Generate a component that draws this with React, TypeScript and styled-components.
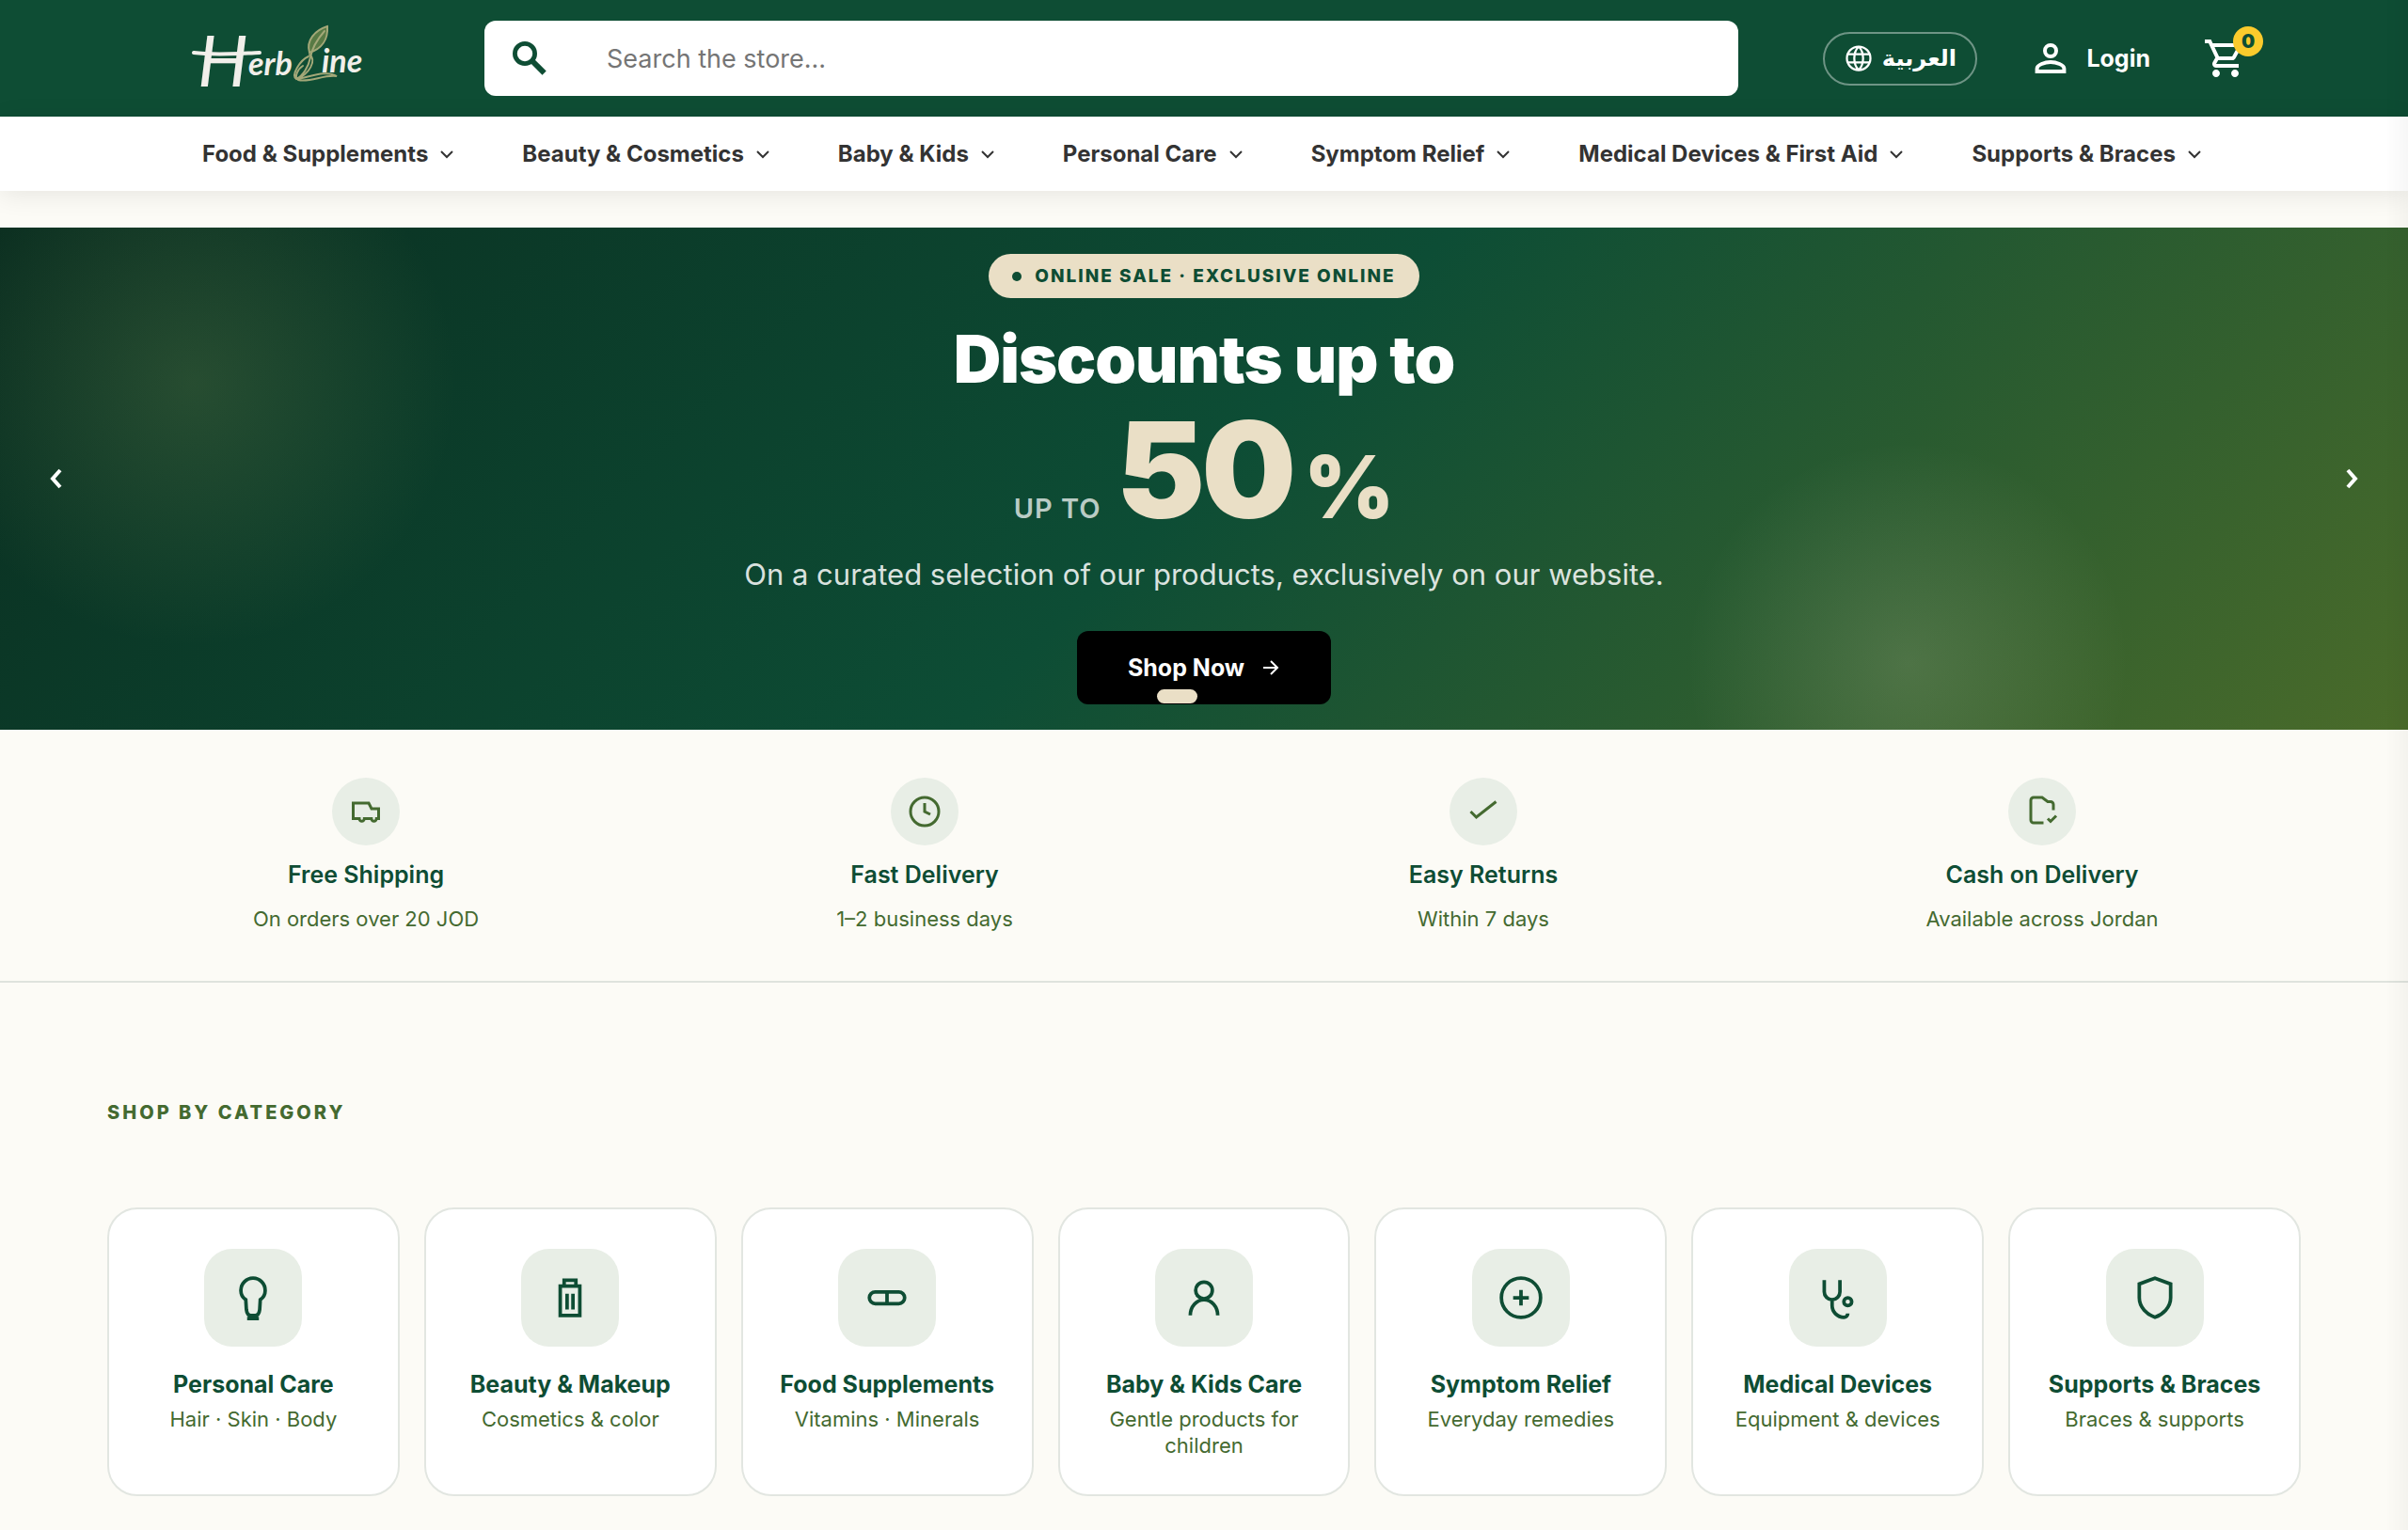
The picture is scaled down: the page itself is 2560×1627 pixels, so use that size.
import React from "react";
import styled, { createGlobalStyle } from "styled-components";

const green = "#0e4d34";
const olive = "#446a30";
const sand = "#eadfc6";

const GlobalStyle = createGlobalStyle`
  * { box-sizing: border-box; }
  body {
    margin: 0;
    background: #fcfbf6;
    color: #333;
    font-family: Inter, "Open Sans", sans-serif;
    -webkit-font-smoothing: antialiased;
  }
  h1, h2, h3, p, ul { margin: 0; padding: 0; }
  ul { list-style: none; }
  a { color: inherit; text-decoration: none; }
  button { font: inherit; cursor: pointer; }
`;

const Page = styled.div`
  overflow-x: hidden;
`;

const EdgeShade = styled.div`
  position: fixed;
  top: 0;
  right: 0;
  bottom: 0;
  width: 24px;
  pointer-events: none;
  background: linear-gradient(to right, transparent, rgba(0, 0, 0, 0.03));
`;

const TopBar = styled.header`
  display: flex;
  align-items: center;
  height: 124px;
  padding: 0 164px 0 204px;
  background: ${green};
  color: #fff;
`;

const LogoLink = styled.a`
  display: block;
  width: 192px;
  height: 100px;
  flex: none;
  margin-right: 119px;
`;

const SearchBox = styled.form`
  display: flex;
  align-items: center;
  flex: 1;
  height: 80px;
  margin-right: 90px;
  border-radius: 12px;
  background: #fff;
`;

const SearchButton = styled.button`
  display: grid;
  place-items: center;
  width: 96px;
  height: 80px;
  padding: 0;
  border: 0;
  background: none;
  color: ${green};
`;

const SearchInput = styled.input`
  flex: 1;
  height: 80px;
  padding: 0 34px;
  border: 0;
  outline: 0;
  background: none;
  font: 400 27px Inter, sans-serif;
  color: #333;
  &::placeholder { color: #757575; opacity: 1; }
`;

const LangButton = styled.button`
  display: flex;
  align-items: center;
  justify-content: center;
  gap: 10px;
  width: 164px;
  height: 57px;
  border: 2px solid rgba(255, 255, 255, 0.4);
  border-radius: 29px;
  background: none;
  color: #fff;
  font: 700 24px "DejaVu Sans", sans-serif;
`;

const AccountLink = styled.a`
  display: flex;
  align-items: center;
  gap: 14px;
  margin-left: 54px;
  font-size: 25px;
  font-weight: 700;
`;

const CartLink = styled.a`
  position: relative;
  display: block;
  width: 54px;
  height: 48px;
  margin-left: 56px;
`;

const CartCount = styled.span`
  position: absolute;
  top: -10px;
  right: -10px;
  width: 32px;
  height: 32px;
  border-radius: 50%;
  background: #fbcb2c;
  color: ${green};
  font-size: 20px;
  font-weight: 900;
  line-height: 32px;
  text-align: center;
`;

const NavBar = styled.nav`
  position: relative;
  background: #fff;
  box-shadow: 0 4px 28px rgba(0, 0, 0, 0.09);
`;

const NavList = styled.ul`
  display: flex;
  justify-content: space-between;
  padding: 0 219px 0 215px;
`;

const NavLink = styled.a`
  display: flex;
  align-items: center;
  gap: 12px;
  height: 79px;
  font-size: 24px;
  font-weight: 700;
  white-space: nowrap;
`;

const Hero = styled.section`
  position: relative;
  display: flex;
  flex-direction: column;
  align-items: center;
  margin-top: 39px;
  padding: 28px 0 27px;
  color: #fff;
  text-align: center;
  background:
    radial-gradient(circle 280px at 205px 165px, rgba(139, 160, 91, 0.22), rgba(139, 160, 91, 0)),
    radial-gradient(circle 235px at calc(100% - 532px) 463px, rgba(236, 230, 205, 0.15), rgba(236, 230, 205, 0)),
    linear-gradient(135deg, #0a2e20 0%, #0d4d35 50%, #4a6b2a 100%);
`;

const SaleBadge = styled.p`
  display: flex;
  align-items: center;
  gap: 14px;
  height: 47px;
  padding: 0 25px;
  border-radius: 24px;
  background: ${sand};
  color: ${green};
  font-size: 19px;
  font-weight: 800;
  letter-spacing: 2px;
  &::before {
    content: "";
    width: 10px;
    height: 10px;
    border-radius: 50%;
    background: currentColor;
  }
`;

const HeroTitle = styled.h1`
  margin-top: 25px;
  font-size: 70px;
  font-weight: 900;
  line-height: 80px;
  letter-spacing: -1px;
`;

const Discount = styled.p`
  display: flex;
  align-items: baseline;
  margin-top: 9px;
  color: ${sand};
`;

const DiscountLead = styled.span`
  margin-right: 16px;
  color: rgba(255, 255, 255, 0.72);
  font-size: 29px;
  font-weight: 600;
  line-height: 40px;
  letter-spacing: 1px;
`;

const DiscountValue = styled.span`
  font-size: 142px;
  font-weight: 900;
  line-height: 136px;
  letter-spacing: -4px;
`;

const DiscountSign = styled.span`
  margin-left: 12px;
  font-size: 92px;
  font-weight: 900;
  line-height: 80px;
`;

const HeroText = styled.p`
  margin-top: 20px;
  color: rgba(255, 255, 255, 0.86);
  font-size: 31px;
  line-height: 48px;
`;

const ShopButton = styled.a`
  display: flex;
  align-items: center;
  justify-content: center;
  gap: 18px;
  width: 270px;
  height: 78px;
  margin-top: 36px;
  border-radius: 12px;
  background: #000;
  font-size: 25px;
  font-weight: 700;
`;

const SlideDot = styled.button`
  position: absolute;
  left: calc(50% - 50px);
  bottom: 28px;
  width: 43px;
  height: 15px;
  padding: 0;
  border: 0;
  border-radius: 8px;
  background: ${sand};
`;

const SlideArrow = styled.button<{ $side: "left" | "right" }>`
  position: absolute;
  ${(p) => p.$side}: 36px;
  top: 243px;
  display: grid;
  place-items: center;
  width: 48px;
  height: 48px;
  padding: 0;
  border: 0;
  background: none;
  color: #fff;
`;

const Perks = styled.ul`
  display: grid;
  grid-template-columns: repeat(4, 1fr);
  gap: 44px;
  padding: 51px 114px 50px;
  border-bottom: 2px solid #dfe3dd;
`;

const Perk = styled.li`
  display: flex;
  flex-direction: column;
  align-items: center;
`;

const PerkIcon = styled.span`
  display: grid;
  place-items: center;
  width: 72px;
  height: 72px;
  border-radius: 50%;
  background: #e8eee6;
  color: ${olive};
`;

const PerkTitle = styled.h3`
  margin-top: 15px;
  color: ${green};
  font-size: 25px;
  font-weight: 600;
  line-height: 32px;
`;

const PerkText = styled.p`
  margin-top: 15px;
  color: ${olive};
  font-size: 22px;
  line-height: 32px;
`;

const Categories = styled.section`
  padding: 122px 114px 36px;
`;

const SectionLabel = styled.h2`
  color: ${olive};
  font-size: 20px;
  font-weight: 800;
  line-height: 32px;
  letter-spacing: 3px;
`;

const CardGrid = styled.ul`
  display: grid;
  grid-template-columns: repeat(7, 1fr);
  gap: 26px;
  margin-top: 85px;
`;

const Card = styled.a`
  display: flex;
  flex-direction: column;
  align-items: center;
  height: 100%;
  padding: 42px 24px 38px;
  border: 2px solid #e2e6e1;
  border-radius: 32px;
  background: #fff;
  text-align: center;
`;

const CardIcon = styled.span`
  display: grid;
  place-items: center;
  width: 104px;
  height: 104px;
  border-radius: 30px;
  background: #e8eee6;
  color: ${green};
`;

const CardTitle = styled.h3`
  margin-top: 24px;
  color: ${green};
  font-size: 25px;
  font-weight: 700;
  line-height: 32px;
  white-space: nowrap;
`;

const CardText = styled.p`
  margin-top: 7px;
  color: ${olive};
  font-size: 22px;
  line-height: 28px;
`;

const Chevron = () => (
  <svg width="16" height="16" viewBox="0 0 16 16" fill="none" stroke="currentColor" strokeWidth="2" aria-hidden="true">
    <path d="M2 5l6 6 6-6" />
  </svg>
);

const Logo = () => (
  <svg width="192" height="100" viewBox="0 0 192 100" aria-hidden="true">
    <g fill="#f1efea" fontFamily="Lato, sans-serif" fontStyle="italic">
      <text x="6" y="80" fontWeight="700">
        <tspan fontSize="76" fontWeight="400">H</tspan>
        <tspan fontSize="34" dy="-12">erb</tspan>
      </text>
      <text x="138" y="65" fontSize="34" fontWeight="700">ine</text>
    </g>
    <path d="M2 44c22 3 46 1 70 0" fill="none" stroke="#f1efea" strokeWidth="4" strokeLinecap="round" />
    <g fill="none" stroke="#a3a878" strokeWidth="2" strokeLinecap="round">
      <path d="M144 16c-13 4-23 15-19 28 13-4 20-14 19-28z" fill="#587a45" />
      <path d="M141 21c-7 8-13 17-15 28-2 10-8 20-15 23-6-4 4-20 13-24" />
      <path d="M125 46c8 6 0 21-14 26 14-2 32-10 43-3-14-2-28 7-41 4-5-3 0-12 5-15" />
    </g>
  </svg>
);

const strokeProps = { fill: "none", stroke: "currentColor", viewBox: "0 0 24 24", "aria-hidden": true } as const;

const perks = [
  {
    title: "Free Shipping",
    text: "On orders over 20 JOD",
    icon: <path d="M3 6h11l2 4h5v7h-1.500a1.800 1.800 0 0 1-3.600 0h-5a1.800 1.800 0 0 1-3.600 0H3z" />,
  },
  {
    title: "Fast Delivery",
    text: "1–2 business days",
    icon: <path d="M12 2a10 10 0 1 0 0 20 10 10 0 0 0 0-20zM12 6v6l4 2" />,
  },
  {
    title: "Easy Returns",
    text: "Within 7 days",
    icon: <path d="M3 12l4 4L21 5" />,
  },
  {
    title: "Cash on Delivery",
    text: "Available across Jordan",
    icon: <path d="M13 20H6a2 2 0 0 1-2-2V4a2 2 0 0 1 2-2h6l4 3h2a2 2 0 0 1 2 2v4M16 17l2 2 4-4" />,
  },
];

const categories = [
  {
    title: "Personal Care",
    text: "Hair · Skin · Body",
    icon: (
      <path d="M12 2A6.200 6.200 0 0 0 5.800 8.400c0 2 1 3.600 2.500 4.600L8.600 18c.2 1.800 1 3 2.200 3h2.400c1.200 0 2-1.200 2.200-3l.3-5c1.500-1 2.500-2.600 2.500-4.600A6.200 6.200 0 0 0 12 2zM9 22.600h6" />
    ),
  },
  {
    title: "Beauty & Makeup",
    text: "Cosmetics & color",
    icon: <path d="M7 6h10v15H7zM9 6V3h6v3M10.500 10v8M13.500 10v8" />,
  },
  {
    title: "Food Supplements",
    text: "Vitamins · Minerals",
    icon: <path d="M6 9h12a3 3 0 0 1 0 6H6a3 3 0 0 1 0-6zM12 9v6" />,
  },
  {
    title: "Baby & Kids Care",
    text: "Gentle products for children",
    icon: <path d="M12 4a4 4 0 1 0 0 8.500 4 4 0 0 0 0-8.500zM5 21a7 8 0 0 1 14 0" />,
  },
  {
    title: "Symptom Relief",
    text: "Everyday remedies",
    icon: <path d="M12 2a10 10 0 1 0 0 20 10 10 0 0 0 0-20zM12 8v8M8 12h8" />,
  },
  {
    title: "Medical Devices",
    text: "Equipment & devices",
    icon: <path d="M5 3v6a4 4 0 0 0 8 0V3M9 13v3a6 6 0 0 0 6 6 2 2 0 0 0 2-2M17 12a2 2 0 1 0 0 4 2 2 0 0 0 0-4z" />,
  },
  {
    title: "Supports & Braces",
    text: "Braces & supports",
    icon: <path d="M12 2l8 3v7c0 5-4 8.500-8 10-4-1.500-8-5-8-10V5z" />,
  },
];

const navItems = [
  "Food & Supplements",
  "Beauty & Cosmetics",
  "Baby & Kids",
  "Personal Care",
  "Symptom Relief",
  "Medical Devices & First Aid",
  "Supports & Braces",
];

export default function App() {
  return (
    <Page>
      <GlobalStyle />
      <TopBar>
        <LogoLink href="#" aria-label="HerbLine">
          <Logo />
        </LogoLink>
        <SearchBox role="search">
          <SearchButton type="button" aria-label="Search">
            <svg width="48" height="48" viewBox="0 0 24 24" fill="none" stroke="currentColor" aria-hidden="true">
              <circle cx="9.500" cy="9.500" r="5.300" strokeWidth="2.400" />
              <path d="M13.500 13.500l6.300 6.300" strokeWidth="3" />
            </svg>
          </SearchButton>
          <SearchInput type="text" placeholder="Search the store..." aria-label="Search the store" />
        </SearchBox>
        <LangButton type="button" lang="ar">
          <svg {...strokeProps} width="30" height="30" strokeWidth={1.8}>
            <circle cx="12" cy="12" r="10" />
            <path d="M12 2c-5 5-5 15 0 20M12 2c5 5 5 15 0 20M3 8.500h18M3 15.500h18" />
          </svg>
          العربية
        </LangButton>
        <AccountLink href="#">
          <svg width="48" height="48" viewBox="0 0 24 24" fill="none" stroke="currentColor" strokeWidth="2" aria-hidden="true">
            <circle cx="12" cy="8" r="3" />
            <path d="M4.800 19v-1.500c0-2 4.200-3.500 7.200-3.500s7.200 1.500 7.200 3.500V19z" />
          </svg>
          Login
        </AccountLink>
        <CartLink href="#" aria-label="Cart">
          <svg width="48" height="48" viewBox="0 0 24 24" fill="currentColor" aria-hidden="true">
            <path d="M15.550 13c.75 0 1.410-.41 1.750-1.030l3.580-6.490A.996.996 0 0 0 20.010 4H5.210l-.94-2H1v2h2l3.600 7.590-1.350 2.440C4.520 15.370 5.480 17 7 17h12v-2H7l1.100-2h7.450zM6.160 6h12.150l-2.760 5H8.530L6.160 6zM7 18c-1.100 0-1.990.9-1.990 2S5.900 22 7 22s2-.9 2-2-.9-2-2-2zm10 0c-1.100 0-1.990.9-1.990 2s.89 2 1.990 2 2-.9 2-2-.9-2-2-2z" />
          </svg>
          <CartCount>0</CartCount>
        </CartLink>
      </TopBar>
      <NavBar>
        <NavList>
          {navItems.map((item) => (
            <li key={item}>
              <NavLink href="#">
                {item}
                <Chevron />
              </NavLink>
            </li>
          ))}
        </NavList>
      </NavBar>
      <Hero>
        <SaleBadge>ONLINE SALE · EXCLUSIVE ONLINE</SaleBadge>
        <HeroTitle>Discounts up to</HeroTitle>
        <Discount>
          <DiscountLead>UP TO</DiscountLead>
          <DiscountValue>50</DiscountValue>
          <DiscountSign>%</DiscountSign>
        </Discount>
        <HeroText>On a curated selection of our products, exclusively on our website.</HeroText>
        <ShopButton href="#">
          Shop Now
          <svg width="20" height="20" viewBox="0 0 20 20" fill="none" stroke="currentColor" strokeWidth="2" aria-hidden="true">
            <path d="M2 10h15M10 3l7 7-7 7" />
          </svg>
        </ShopButton>
        <SlideDot type="button" aria-label="Slide 1" />
        <SlideArrow type="button" $side="left" aria-label="Previous">
          <svg width="24" height="24" viewBox="0 0 24 24" fill="none" stroke="currentColor" strokeWidth="4" aria-hidden="true">
            <path d="M16 3l-8 9 8 9" />
          </svg>
        </SlideArrow>
        <SlideArrow type="button" $side="right" aria-label="Next">
          <svg width="24" height="24" viewBox="0 0 24 24" fill="none" stroke="currentColor" strokeWidth="4" aria-hidden="true">
            <path d="M8 3l8 9-8 9" />
          </svg>
        </SlideArrow>
      </Hero>
      <Perks>
        {perks.map((perk) => (
          <Perk key={perk.title}>
            <PerkIcon>
              <svg {...strokeProps} width="36" height="36" strokeWidth={2}>
                {perk.icon}
              </svg>
            </PerkIcon>
            <PerkTitle>{perk.title}</PerkTitle>
            <PerkText>{perk.text}</PerkText>
          </Perk>
        ))}
      </Perks>
      <Categories>
        <SectionLabel>SHOP BY CATEGORY</SectionLabel>
        <CardGrid>
          {categories.map((category) => (
            <li key={category.title}>
              <Card href="#">
                <CardIcon>
                  <svg {...strokeProps} width="50" height="50" strokeWidth={1.8}>
                    {category.icon}
                  </svg>
                </CardIcon>
                <CardTitle>{category.title}</CardTitle>
                <CardText>{category.text}</CardText>
              </Card>
            </li>
          ))}
        </CardGrid>
      </Categories>
      <EdgeShade />
    </Page>
  );
}
